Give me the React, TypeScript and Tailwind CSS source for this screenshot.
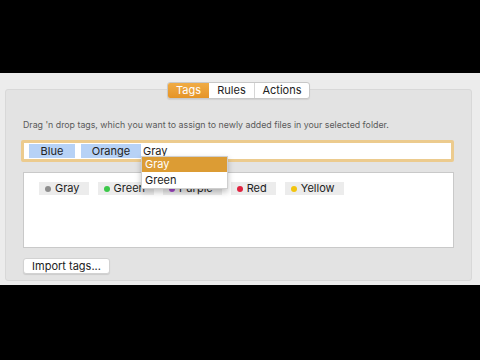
const tags = [
  { name: "Gray", dot: "bg-[#8e8e8e]" },
  { name: "Green", dot: "bg-[#3cc84a]" },
  { name: "Purple", dot: "bg-[#a447c9]" },
  { name: "Red", dot: "bg-[#e0223f]" },
  { name: "Yellow", dot: "bg-[#f2c40f]" },
];

export default function App() {
  return (
    <div
      className="flex h-[360px] w-[480px] flex-col bg-black text-[11px] text-[#222]"
      style={{ fontFamily: "Inter, 'Noto Sans', sans-serif" }}
    >
      <div className="h-[73px]" />

      {/* Window */}
      <div className="flex h-[212px] flex-col bg-[#ececec] pt-[9px]">
        {/* Tabs */}
        <div className="relative z-10 -mb-[10px] flex justify-center pr-[3px]">
          <div className="flex h-[17px] overflow-hidden rounded-[3px] border border-[#c8c8c8] bg-white shadow-[0_1px_1px_rgba(0,0,0,0.08)]">
            <div className="flex w-[41px] items-center justify-center bg-gradient-to-b from-[#f0ac45] to-[#e59426] text-white">
              Tags
            </div>
            <div className="flex w-[46px] items-center justify-center border-r border-[#d6d6d6]">
              Rules
            </div>
            <div className="flex w-[54px] items-center justify-center">
              Actions
            </div>
          </div>
        </div>

        {/* Panel */}
        <div className="ml-[5px] mr-[8px] flex h-[192px] flex-col rounded-[3px] border border-[#d8d8d8] bg-[#e3e3e3] pl-[15px] pr-[17px] pt-[29px]">
          <p className="ml-[2px] h-[12px] text-[8.8px] leading-[12px] text-[#5a5a5a]">
            Drag 'n drop tags, which you want to assign to newly added files in your selected folder.
          </p>

          {/* Token field */}
          <div className="relative mt-[9px] flex h-[22px] items-center rounded-[2px] border-[3px] border-[#eccb8e] bg-white pl-[5px]">
            <div className="flex items-center gap-[6px]">
              <span className="flex h-[14px] w-[46px] items-center justify-center bg-[#b7d2f6]">Blue</span>
              <span className="flex h-[14px] w-[60px] items-center justify-center bg-[#b7d2f6]">Orange</span>
            </div>
            <span className="ml-[2px]">Gray</span>

            {/* Suggestions */}
            <div className="absolute left-[117px] top-[13px] z-20 w-[87px] border border-[#cfcfcf] bg-white shadow-[0_3px_6px_rgba(0,0,0,0.25)]">
              <div className="flex h-[15px] items-center bg-[#dc9c34] pl-[3px] text-white">Gray</div>
              <div className="flex h-[16px] items-center pl-[3px]">Green</div>
            </div>
          </div>

          {/* Tag list */}
          <div className="ml-[2px] mt-[10px] h-[76px] border border-[#c9c9c9] bg-white pl-[15px] pt-[9px]">
            <div className="flex gap-[9px]">
              {tags.map((t) => (
                <span
                  key={t.name}
                  className="flex h-[13px] items-center gap-[4px] bg-[#ececec] pl-[6px] pr-[9px]"
                >
                  <span className={`h-[6px] w-[6px] rounded-full ${t.dot}`} />
                  {t.name}
                </span>
              ))}
            </div>
          </div>

          <button className="ml-[2px] mt-[10px] flex h-[16px] w-[87px] items-center justify-center rounded-[3px] border border-[#d2d2d2] bg-white shadow-[0_1px_1px_rgba(0,0,0,0.1)]">
            Import tags...
          </button>
        </div>
      </div>
    </div>
  );
}
